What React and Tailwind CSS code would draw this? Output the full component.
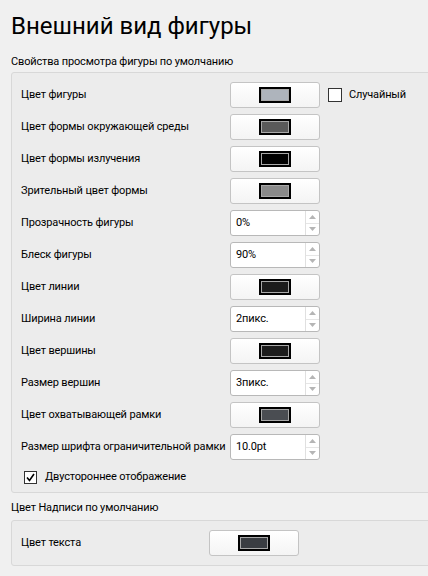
import React from "react";

const font = { fontFamily: 'Roboto, "Liberation Sans", Arial, sans-serif' };

const ColorButton = ({ color }) => (
  <button className="flex items-center justify-center w-[90px] h-[26px] rounded-[3px] border border-[#c4c4c4] bg-gradient-to-b from-[#ffffff] to-[#f4f4f4]">
    <span className="block w-[32px] h-[16px] border-2 border-black">
      <span
        className="block w-full h-full border border-[#a8a8a8]"
        style={{ backgroundColor: color }}
      />
    </span>
  </button>
);

const SpinBox = ({ value }) => (
  <div className="flex w-[90px] h-[26px] rounded-[3px] border border-[#b8b8b8] bg-white">
    <div className="flex-1 flex items-center pl-[5px] text-black">{value}</div>
    <div className="flex flex-col w-[14px] border-l border-[#e0e0e0]">
      <div className="flex-1 flex items-center justify-center border-b border-[#e6e6e6]">
        <svg width="7" height="4" viewBox="0 0 7 4">
          <path d="M0 4 L3.5 0 L7 4 Z" fill="#b5b5b5" />
        </svg>
      </div>
      <div className="flex-1 flex items-center justify-center">
        <svg width="7" height="4" viewBox="0 0 7 4">
          <path d="M0 0 L3.5 4 L7 0 Z" fill="#b5b5b5" />
        </svg>
      </div>
    </div>
  </div>
);

const rows = [
  { label: "Цвет фигуры", color: "#aeb4bc", random: true },
  { label: "Цвет формы окружающей среды", color: "#5a5a5a" },
  { label: "Цвет формы излучения", color: "#000000" },
  { label: "Зрительный цвет формы", color: "#8a8a8a" },
  { label: "Прозрачность фигуры", spin: "0%" },
  { label: "Блеск фигуры", spin: "90%" },
  { label: "Цвет линии", color: "#1c1c1c" },
  { label: "Ширина линии", spin: "2пикс." },
  { label: "Цвет вершины", color: "#1c1c1c" },
  { label: "Размер вершин", spin: "3пикс." },
  { label: "Цвет охватывающей рамки", color: "#4a4d52" },
  { label: "Размер шрифта ограничительной рамки", spin: "10.0pt" },
];

export default function App() {
  return (
    <div className="w-[428px] h-[576px] overflow-hidden bg-[#f0f0f0] text-[11px] tracking-[-0.15px] text-black" style={font}>
      <div className="pl-[11px] pt-[10px]">
        <h1 className="text-[24px] leading-[32px] tracking-normal">Внешний вид фигуры</h1>
        <div className="mt-[12px] leading-[16px] whitespace-nowrap">Свойства просмотра фигуры по умолчанию</div>

        <div className="mt-[2px] w-[440px] rounded-[3px] border border-[#d8d8d8] bg-[#ececec] pl-[9px] pt-[9px] pb-[7px]">
          <div className="flex flex-col gap-[6px]">
            {rows.map((r) => (
              <div key={r.label} className="flex items-center h-[26px]">
                <div className="w-[209px] leading-[16px] whitespace-nowrap">{r.label}</div>
                {r.spin ? <SpinBox value={r.spin} /> : <ColorButton color={r.color} />}
                {r.random && (
                  <div className="flex items-center ml-[8px]">
                    <span className="block w-[14px] h-[14px] border border-[#333] bg-white" />
                    <span className="ml-[7px]">Случайный</span>
                  </div>
                )}
              </div>
            ))}
          </div>
          <div className="flex items-center mt-[9px] ml-[3px] h-[16px]">
            <span className="flex items-center justify-center w-[13px] h-[13px] border border-[#333] bg-white">
              <svg width="9" height="9" viewBox="0 0 9 9">
                <path d="M1 4.5 L3.5 7.5 L8 1" stroke="#000" strokeWidth="1.6" fill="none" />
              </svg>
            </span>
            <span className="ml-[8px]">Двустороннее отображение</span>
          </div>
        </div>

        <div className="mt-[7px] leading-[16px]">Цвет Надписи по умолчанию</div>
        <div className="mt-[4px] w-[440px] rounded-[3px] border border-[#d8d8d8] bg-[#ececec] pl-[9px] py-[9px]">
          <div className="flex items-center h-[26px]">
            <div className="w-[188px]">Цвет текста</div>
            <ColorButton color="#3a3d42" />
          </div>
        </div>
      </div>
    </div>
  );
}
